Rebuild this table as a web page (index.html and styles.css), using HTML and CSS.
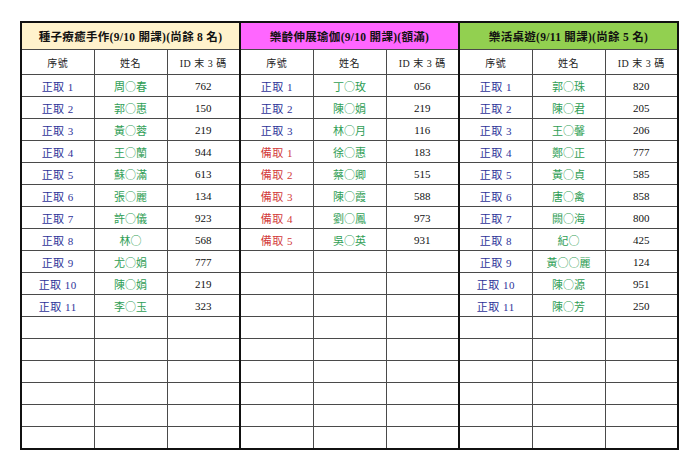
FILE: index.html
```html
<!DOCTYPE html>
<html lang="zh-Hant">
<head>
<meta charset="utf-8">
<title>報名名單</title>
<link rel="stylesheet" href="styles.css">
</head>
<body>
<div class="page">
<table class="sheet">
<colgroup>
<col><col><col><col><col><col><col><col><col>
</colgroup>
<thead>
<tr class="title">
<th colspan="3" class="sec t1">種子療癒手作(9/10 開課)(尚餘 8 名)</th>
<th colspan="3" class="sec t2">樂齡伸展瑜伽(9/10 開課)(額滿)</th>
<th colspan="3" class="sec t3">樂活桌遊(9/11 開課)(尚餘 5 名)</th>
</tr>
<tr class="heads">
<th class="first">序號</th><th>姓名</th><th class="last">ID 末 3 碼</th>
<th class="first">序號</th><th>姓名</th><th class="last">ID 末 3 碼</th>
<th class="first">序號</th><th>姓名</th><th class="last">ID 末 3 碼</th>
</tr>
</thead>
<tbody>
<tr><td class="first ok">正取 1</td><td class="nm">周○春</td><td class="last id">762</td><td class="first ok">正取 1</td><td class="nm">丁○玫</td><td class="last id">056</td><td class="first ok">正取 1</td><td class="nm">郭○珠</td><td class="last id">820</td></tr>
<tr><td class="first ok">正取 2</td><td class="nm">郭○惠</td><td class="last id">150</td><td class="first ok">正取 2</td><td class="nm">陳○娟</td><td class="last id">219</td><td class="first ok">正取 2</td><td class="nm">陳○君</td><td class="last id">205</td></tr>
<tr><td class="first ok">正取 3</td><td class="nm">黃○蓉</td><td class="last id">219</td><td class="first ok">正取 3</td><td class="nm">林○月</td><td class="last id">116</td><td class="first ok">正取 3</td><td class="nm">王○馨</td><td class="last id">206</td></tr>
<tr><td class="first ok">正取 4</td><td class="nm">王○蘭</td><td class="last id">944</td><td class="first wait">備取 1</td><td class="nm">徐○惠</td><td class="last id">183</td><td class="first ok">正取 4</td><td class="nm">鄭○正</td><td class="last id">777</td></tr>
<tr><td class="first ok">正取 5</td><td class="nm">蘇○滿</td><td class="last id">613</td><td class="first wait">備取 2</td><td class="nm">蔡○卿</td><td class="last id">515</td><td class="first ok">正取 5</td><td class="nm">黃○貞</td><td class="last id">585</td></tr>
<tr><td class="first ok">正取 6</td><td class="nm">張○麗</td><td class="last id">134</td><td class="first wait">備取 3</td><td class="nm">陳○霞</td><td class="last id">588</td><td class="first ok">正取 6</td><td class="nm">唐○禽</td><td class="last id">858</td></tr>
<tr><td class="first ok">正取 7</td><td class="nm">許○儀</td><td class="last id">923</td><td class="first wait">備取 4</td><td class="nm">劉○鳳</td><td class="last id">973</td><td class="first ok">正取 7</td><td class="nm">闕○海</td><td class="last id">800</td></tr>
<tr><td class="first ok">正取 8</td><td class="nm">林○</td><td class="last id">568</td><td class="first wait">備取 5</td><td class="nm">吳○英</td><td class="last id">931</td><td class="first ok">正取 8</td><td class="nm">紀○</td><td class="last id">425</td></tr>
<tr><td class="first ok">正取 9</td><td class="nm">尤○娟</td><td class="last id">777</td><td class="first"></td><td></td><td class="last"></td><td class="first ok">正取 9</td><td class="nm">黃○○麗</td><td class="last id">124</td></tr>
<tr><td class="first ok">正取 10</td><td class="nm">陳○娟</td><td class="last id">219</td><td class="first"></td><td></td><td class="last"></td><td class="first ok">正取 10</td><td class="nm">陳○源</td><td class="last id">951</td></tr>
<tr><td class="first ok">正取 11</td><td class="nm">李○玉</td><td class="last id">323</td><td class="first"></td><td></td><td class="last"></td><td class="first ok">正取 11</td><td class="nm">陳○芳</td><td class="last id">250</td></tr>
<tr><td class="first"></td><td></td><td class="last"></td><td class="first"></td><td></td><td class="last"></td><td class="first"></td><td></td><td class="last"></td></tr>
<tr><td class="first"></td><td></td><td class="last"></td><td class="first"></td><td></td><td class="last"></td><td class="first"></td><td></td><td class="last"></td></tr>
<tr><td class="first"></td><td></td><td class="last"></td><td class="first"></td><td></td><td class="last"></td><td class="first"></td><td></td><td class="last"></td></tr>
<tr><td class="first"></td><td></td><td class="last"></td><td class="first"></td><td></td><td class="last"></td><td class="first"></td><td></td><td class="last"></td></tr>
<tr><td class="first"></td><td></td><td class="last"></td><td class="first"></td><td></td><td class="last"></td><td class="first"></td><td></td><td class="last"></td></tr>
<tr class="end"><td class="first"></td><td></td><td class="last"></td><td class="first"></td><td></td><td class="last"></td><td class="first"></td><td></td><td class="last"></td></tr>
</tbody>
</table>
</div>
</body>
</html>
```

FILE: styles.css
```css
html, body {
  margin: 0;
  padding: 0;
  background: #ffffff;
}

.page {
  padding: 21px 0 0 20px;
}

.sheet {
  border-collapse: collapse;
  table-layout: fixed;
  width: 656px;
  font-family: "Liberation Serif", "Noto Sans CJK TC", serif;
  color: #111111;
}

.sheet col {
  width: 73px;
}

.sheet th,
.sheet td {
  border: 1px solid #4a4a4a;
  padding: 0;
  text-align: center;
  vertical-align: middle;
  white-space: nowrap;
  overflow: hidden;
}

.title th {
  height: 26px;
  font-size: 11.5px;
  font-weight: bold;
  letter-spacing: 0.3px;
  border-top: 2px solid #111111;
  border-left: 2px solid #111111;
  border-right: 2px solid #111111;
  border-bottom: 1px solid #4a4a4a;
}

.t1 { background: #fff2cc; }
.t2 { background: #ff66ff; }
.t3 { background: #92d050; }

.heads th {
  height: 24px;
  font-size: 10px;
  font-weight: normal;
  color: #222222;
  letter-spacing: 0.5px;
}

.sheet td {
  height: 21px;
  font-size: 11px;
}

.sheet .first {
  border-left: 2px solid #111111;
}

.sheet .last {
  border-right: 2px solid #111111;
}

.end td {
  border-bottom: 2px solid #111111;
}

.ok {
  color: #2e3399;
  letter-spacing: 0.5px;
}

.wait {
  color: #d23a3a;
  letter-spacing: 0.5px;
}

.nm {
  color: #2f9e55;
  font-family: "Noto Sans CJK TC", sans-serif;
  font-size: 10.5px;
}

.id {
  font-size: 12.5px;
  color: #111111;
}
```
